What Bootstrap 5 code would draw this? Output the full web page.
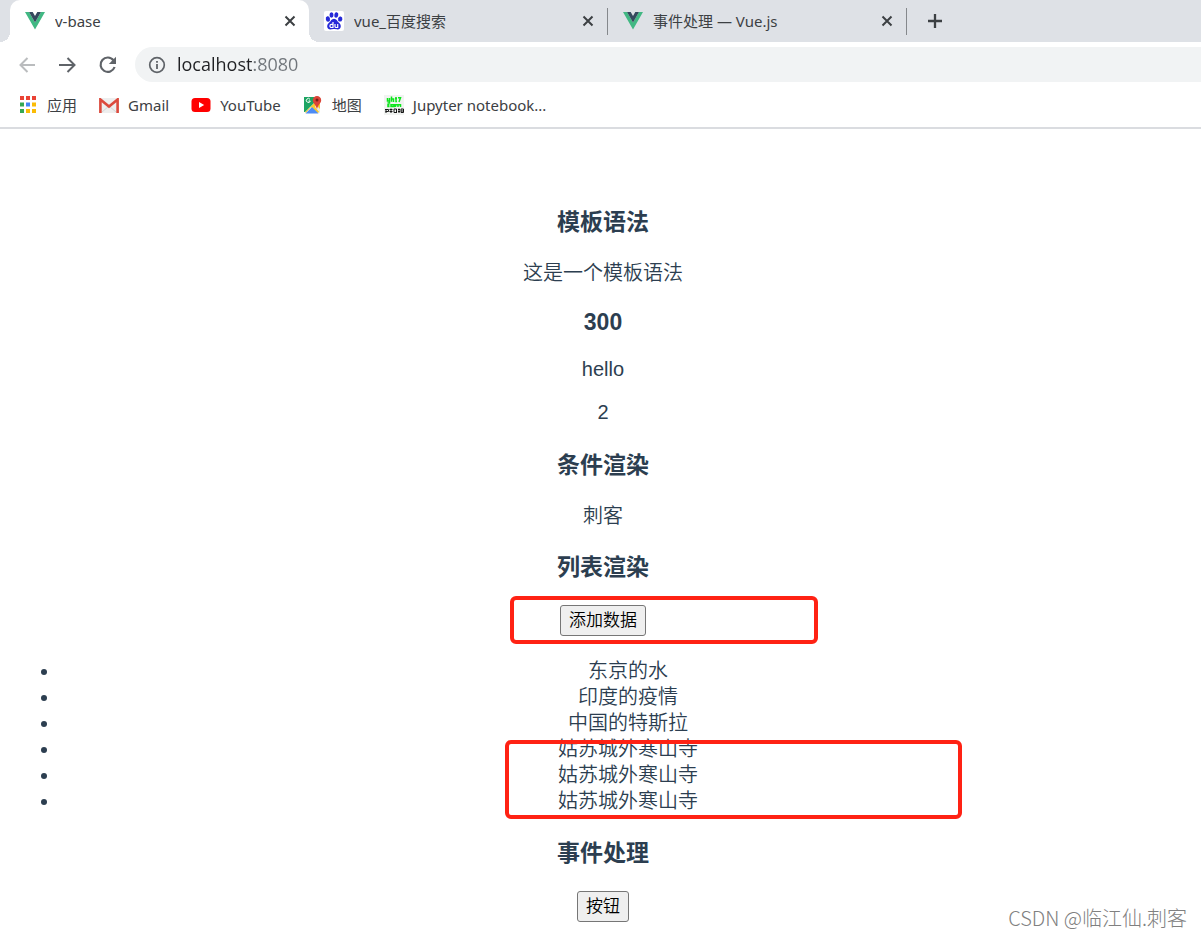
<!DOCTYPE html>
<html lang="zh-CN">
<head>
<meta charset="utf-8">
<meta name="viewport" content="width=device-width, initial-scale=1">
<title>v-base</title>
<link href="https://cdn.jsdelivr.net/npm/bootstrap@5.3.0/dist/css/bootstrap.min.css" rel="stylesheet">
<style>
  body { font-family: "Noto Sans", "Noto Sans CJK SC", sans-serif; font-size: 15px; line-height: 20px; color: #3c4043; background: #fff; overflow-x: hidden; }
  .tabstrip { background: #dee1e6; height: 42px; padding-left: 10px; }
  .tab { flex: 0 1 299px; min-width: 0; position: relative; padding: 0 13px 0 15px; gap: 10px; }
  .tab a { flex: 1; color: inherit; text-decoration: none; overflow: hidden; white-space: nowrap; }
  .tab.current { background: #fff; border-radius: 10px 10px 0 0; }
  .tab.current::before, .tab.current::after { content: ""; position: absolute; bottom: 0; width: 10px; height: 10px; }
  .tab.current::before { right: 100%; background: radial-gradient(circle at 0 0, #dee1e6 10px, #fff 10px); }
  .tab.current::after { left: 100%; background: radial-gradient(circle at 100% 0, #dee1e6 10px, #fff 10px); }
  .tab.divided { border-right: 1px solid #85888c; border-image: linear-gradient(transparent 9px, #85888c 9px, #85888c 34px, transparent 34px) 1; }
  .plain { border: 0; background: none; padding: 0; display: flex; color: #3c4043; }
  .toolbar { padding: 5px 0 5px 17px; gap: 19px; }
  .address { background: #f1f3f4; height: 35px; border-radius: 18px 0 0 18px; padding-left: 13px; gap: 11px; margin-left: -2px; }
  .address input { font-family: "Open Sans", "Noto Sans CJK SC", sans-serif; border: 0; outline: 0; flex: 1; min-width: 0; padding: 0 0 2px; height: 30px; font-size: 18px; color: transparent; background: linear-gradient(90deg, #202124 77px, #70757a 77px); -webkit-background-clip: text; background-clip: text; }
  .bookmarks { padding: 6px 0 10px 18px; gap: 22px; border-bottom: 2px solid #dadce0; height: 42px; }
  .bookmarks a { color: inherit; text-decoration: none; gap: 9px; white-space: nowrap; }
  .site { font-family: "Liberation Sans", "Noto Sans CJK SC", sans-serif; font-size: 20px; line-height: 26px; color: #2c3e50; font-weight: 350; padding: 55px 0 14px 5px; }
  .site h3 { font-size: 23px; line-height: 33px; font-weight: 700; margin: 22px 0 21px; }
  .site p { margin: 0 0 20px; }
  .site .latin { line-height: 23px; }
  .site h3.latin { line-height: 29px; }
  .site p.latin + h3 { margin-top: 25px; }
  .site ul { margin: 22px 0 23px; padding: 0 5px 0 55px; }
  .demo-btn { font-size: 17px; line-height: 22px; font-weight: 350; color: #000; background: #efefef; border: 1px solid #767676; border-radius: 3px; padding: 4px 8px 3px; display: inline-block; vertical-align: top; }
  .marked { position: relative; }
  .marked::after { content: ""; position: absolute; border: 4px solid #ff2214; border-radius: 6px; pointer-events: none; }
  .mark-button::after { left: calc(50% - 93px); top: -9px; width: 308px; height: 48px; }
  .mark-list::after { left: calc(50% - 98px); bottom: -5px; width: 457px; height: 79px; }
  .watermark { font-family: "Noto Sans CJK SC", sans-serif; position: absolute; right: 14px; bottom: 6px; font-size: 20px; line-height: 24px; font-weight: 300; color: #808080; }
</style>
</head>
<body>
<svg width="0" height="0" class="position-absolute" aria-hidden="true">
  <symbol id="vue" viewBox="0 0 20 18"><path fill="#41b883" d="M0 0h4l6 10.500 6-10.500h4L10 17.500z"/><path fill="#35495e" d="M4 0h3.700L10 4l2.300-4H16l-6 10.500z"/></symbol>
  <symbol id="close" viewBox="0 0 12 12"><path d="M1.500 1.500l9 9M10.500 1.500l-9 9" stroke="#3c4043" stroke-width="2" fill="none"/></symbol>
</svg>
<header>
  <nav class="tabstrip d-flex" aria-label="标签页">
    <div class="tab current d-flex align-items-center">
      <svg width="20" height="18"><use href="#vue"/></svg><a href="#">v-base</a>
      <button class="plain" aria-label="关闭"><svg width="12" height="12"><use href="#close"/></svg></button>
    </div>
    <div class="tab divided d-flex align-items-center">
      <svg width="20" height="20" viewBox="0 0 20 20"><rect width="20" height="20" rx="2" fill="#fff"/><g fill="#2529d8"><ellipse cx="3.900" cy="8" rx="2.100" ry="2.700" transform="rotate(-12 3.900 8)"/><ellipse cx="7.500" cy="4" rx="2" ry="2.700"/><ellipse cx="12.300" cy="4" rx="2" ry="2.700" transform="rotate(10 12.300 4)"/><ellipse cx="16.200" cy="8" rx="2.100" ry="2.600" transform="rotate(12 16.200 8)"/><path d="M10 7.800c2.500 0 3 2.300 5 4 3 2.500 2 6.600-1.300 6.600-1.500 0-2-.400-3.700-.400s-2.200.400-3.700.400C3 18.400 2 14.300 5 11.800c2-1.700 2.500-4 5-4z"/></g><path d="M9 11v5.500H7.500a1.500 1.500 0 0 1 0-3.200H9M11 13v2.500q0 1 1 1h1.700V13" fill="none" stroke="#fff" stroke-width="1.200"/></svg>
      <a href="#">vue_百度搜索</a>
      <button class="plain" aria-label="关闭"><svg width="12" height="12"><use href="#close"/></svg></button>
    </div>
    <div class="tab divided d-flex align-items-center">
      <svg width="20" height="18"><use href="#vue"/></svg><a href="#">事件处理 — Vue.js</a>
      <button class="plain" aria-label="关闭"><svg width="12" height="12"><use href="#close"/></svg></button>
    </div>
    <button class="plain align-self-center ms-3 ps-1" aria-label="新标签页"><svg width="16" height="16" viewBox="0 0 16 16"><path d="M8 1v14M1 8h14" stroke="#3c4043" stroke-width="2.300"/></svg></button>
  </nav>
  <div class="toolbar d-flex align-items-center">
    <button class="plain" aria-label="后退"><svg width="21" height="20" viewBox="0 0 21 20" fill="none" stroke="#babcbe" stroke-width="2"><path d="M18 10H4M10.500 3L3.500 10l7 7"/></svg></button>
    <button class="plain" aria-label="前进"><svg width="21" height="20" viewBox="0 0 21 20" fill="none" stroke="#5f6368" stroke-width="2"><path d="M2 10h15M10.500 3l7 7-7 7"/></svg></button>
    <button class="plain" aria-label="重新加载"><svg width="21" height="20" viewBox="0 0 21 20"><path d="M16.500 5.300A7.200 7.200 0 1 0 17.600 12" fill="none" stroke="#5f6368" stroke-width="2.200"/><path d="M19 1.800V9h-7.200z" fill="#5f6368"/></svg></button>
    <div class="address d-flex align-items-center flex-grow-1">
      <svg width="18" height="18" viewBox="0 0 18 18"><circle cx="9" cy="9" r="7.300" fill="none" stroke="#5f6368" stroke-width="1.700"/><path d="M8.100 8h1.800v5H8.100zM8.100 5h1.800v1.800H8.100z" fill="#5f6368"/></svg>
      <input type="text" value="localhost:8080" aria-label="地址">
    </div>
  </div>
  <nav class="bookmarks d-flex align-items-center" aria-label="书签">
    <a href="#" class="d-flex align-items-center"><svg width="20" height="18" viewBox="0 0 20 18"><path fill="#ea4335" d="M2 0h4v4H2zM8 0h4v4H8zM14 0h4v4h-4z"/><path fill="#34a853" d="M2 6.500h4v4H2zM2 13h4v4H2z"/><path fill="#4285f4" d="M8 6.500h4v4H8z"/><path fill="#fbbc05" d="M14 6.500h4v4h-4zM8 13h4v4H8zM14 13h4v4h-4z"/></svg>应用</a>
    <a href="#" class="d-flex align-items-center"><svg width="20" height="15" viewBox="0 0 20 15"><rect width="20" height="15" rx="1.500" fill="#eee"/><path d="M3 14l7-6 7 6" fill="none" stroke="#d5d5d5"/><path d="M1.400 15V1.500L10 8.500l8.600-7V15" fill="none" stroke="#dc4a3d" stroke-width="2.600"/></svg>Gmail</a>
    <a href="#" class="d-flex align-items-center"><svg width="20" height="14" viewBox="0 0 20 14"><rect x=".5" width="19" height="14" rx="3.500" fill="#f00"/><path fill="#fff" d="M8 4l5.200 3L8 10z"/></svg>YouTube</a>
    <a href="#" class="d-flex align-items-center"><svg width="20" height="20" viewBox="0 0 20 20"><path fill="#fbc92f" d="M2 17L15 4l2 2v11l-3 1L8 12l-5 6z"/><path fill="#1da462" d="M1 2h12v4L2 17H1z"/><path fill="#e9eaeb" d="M13 10l4 4v4l-5-6z"/><path fill="#4c8bf5" d="M2.500 18.500L9 12l6.500 6.500z"/><path d="M7 4.300A2 2 0 1 0 7.300 6H5.500" fill="none" stroke="#fff" stroke-width="1"/><path fill="#db4437" d="M14 1a4.200 4.200 0 0 1 4.200 4.200c0 3-3 4-4.200 8.800-1.200-4.800-4.200-5.800-4.200-8.800A4.200 4.200 0 0 1 14 1z"/><circle cx="14" cy="5" r="1.500" fill="#762118"/></svg>地图</a>
    <a href="#" class="d-flex align-items-center"><svg width="20" height="20" viewBox="0 0 20 20"><rect width="20" height="20" fill="#f1f3f1"/><g fill="none" stroke="#0de51c" stroke-width="1.500"><path d="M3.500 3v3h2V3v5h-2M7.500 1.500v5.200M7.500 4h2v3M12 2v4.500h1M11 3.500h2M14 2.700h2.500L15 7M5.500 9.700H4v1.800h1.500M7 9.700h3v1.800H7zM11.500 12V9.700h5V12M14 9.700V12"/></g><g fill="none" stroke="#151515"><path d="M1 14.500h3.500M1.500 16.500h3v-2M2 14v4M5.500 14.500h3M5.500 16.500h3M7 13.500V18M10 14h2.500v3.500M10 14v3.500h3M14 14.500h2M14 16.500h2M15 13.500V18M17 14h2.500v3.500H17zM17 16h2.500"/></g></svg>Jupyter notebook...</a>
  </nav>
</header>
<main class="site text-center position-relative">
  <h3>模板语法</h3>
  <p>这是一个模板语法</p>
  <h3 class="latin">300</h3>
  <p class="latin">hello</p>
  <p class="latin">2</p>
  <h3>条件渲染</h3>
  <p>刺客</p>
  <h3>列表渲染</h3>
  <div class="marked mark-button"><button class="demo-btn" type="button">添加数据</button></div>
  <ul class="marked mark-list">
    <li>东京的水</li>
    <li>印度的疫情</li>
    <li>中国的特斯拉</li>
    <li>姑苏城外寒山寺</li>
    <li>姑苏城外寒山寺</li>
    <li>姑苏城外寒山寺</li>
  </ul>
  <h3>事件处理</h3>
  <button class="demo-btn" type="button">按钮</button>
  <div class="watermark">CSDN @临江仙.刺客</div>
</main>
<script src="https://cdn.jsdelivr.net/npm/bootstrap@5.3.0/dist/js/bootstrap.bundle.min.js"></script>
</body>
</html>
